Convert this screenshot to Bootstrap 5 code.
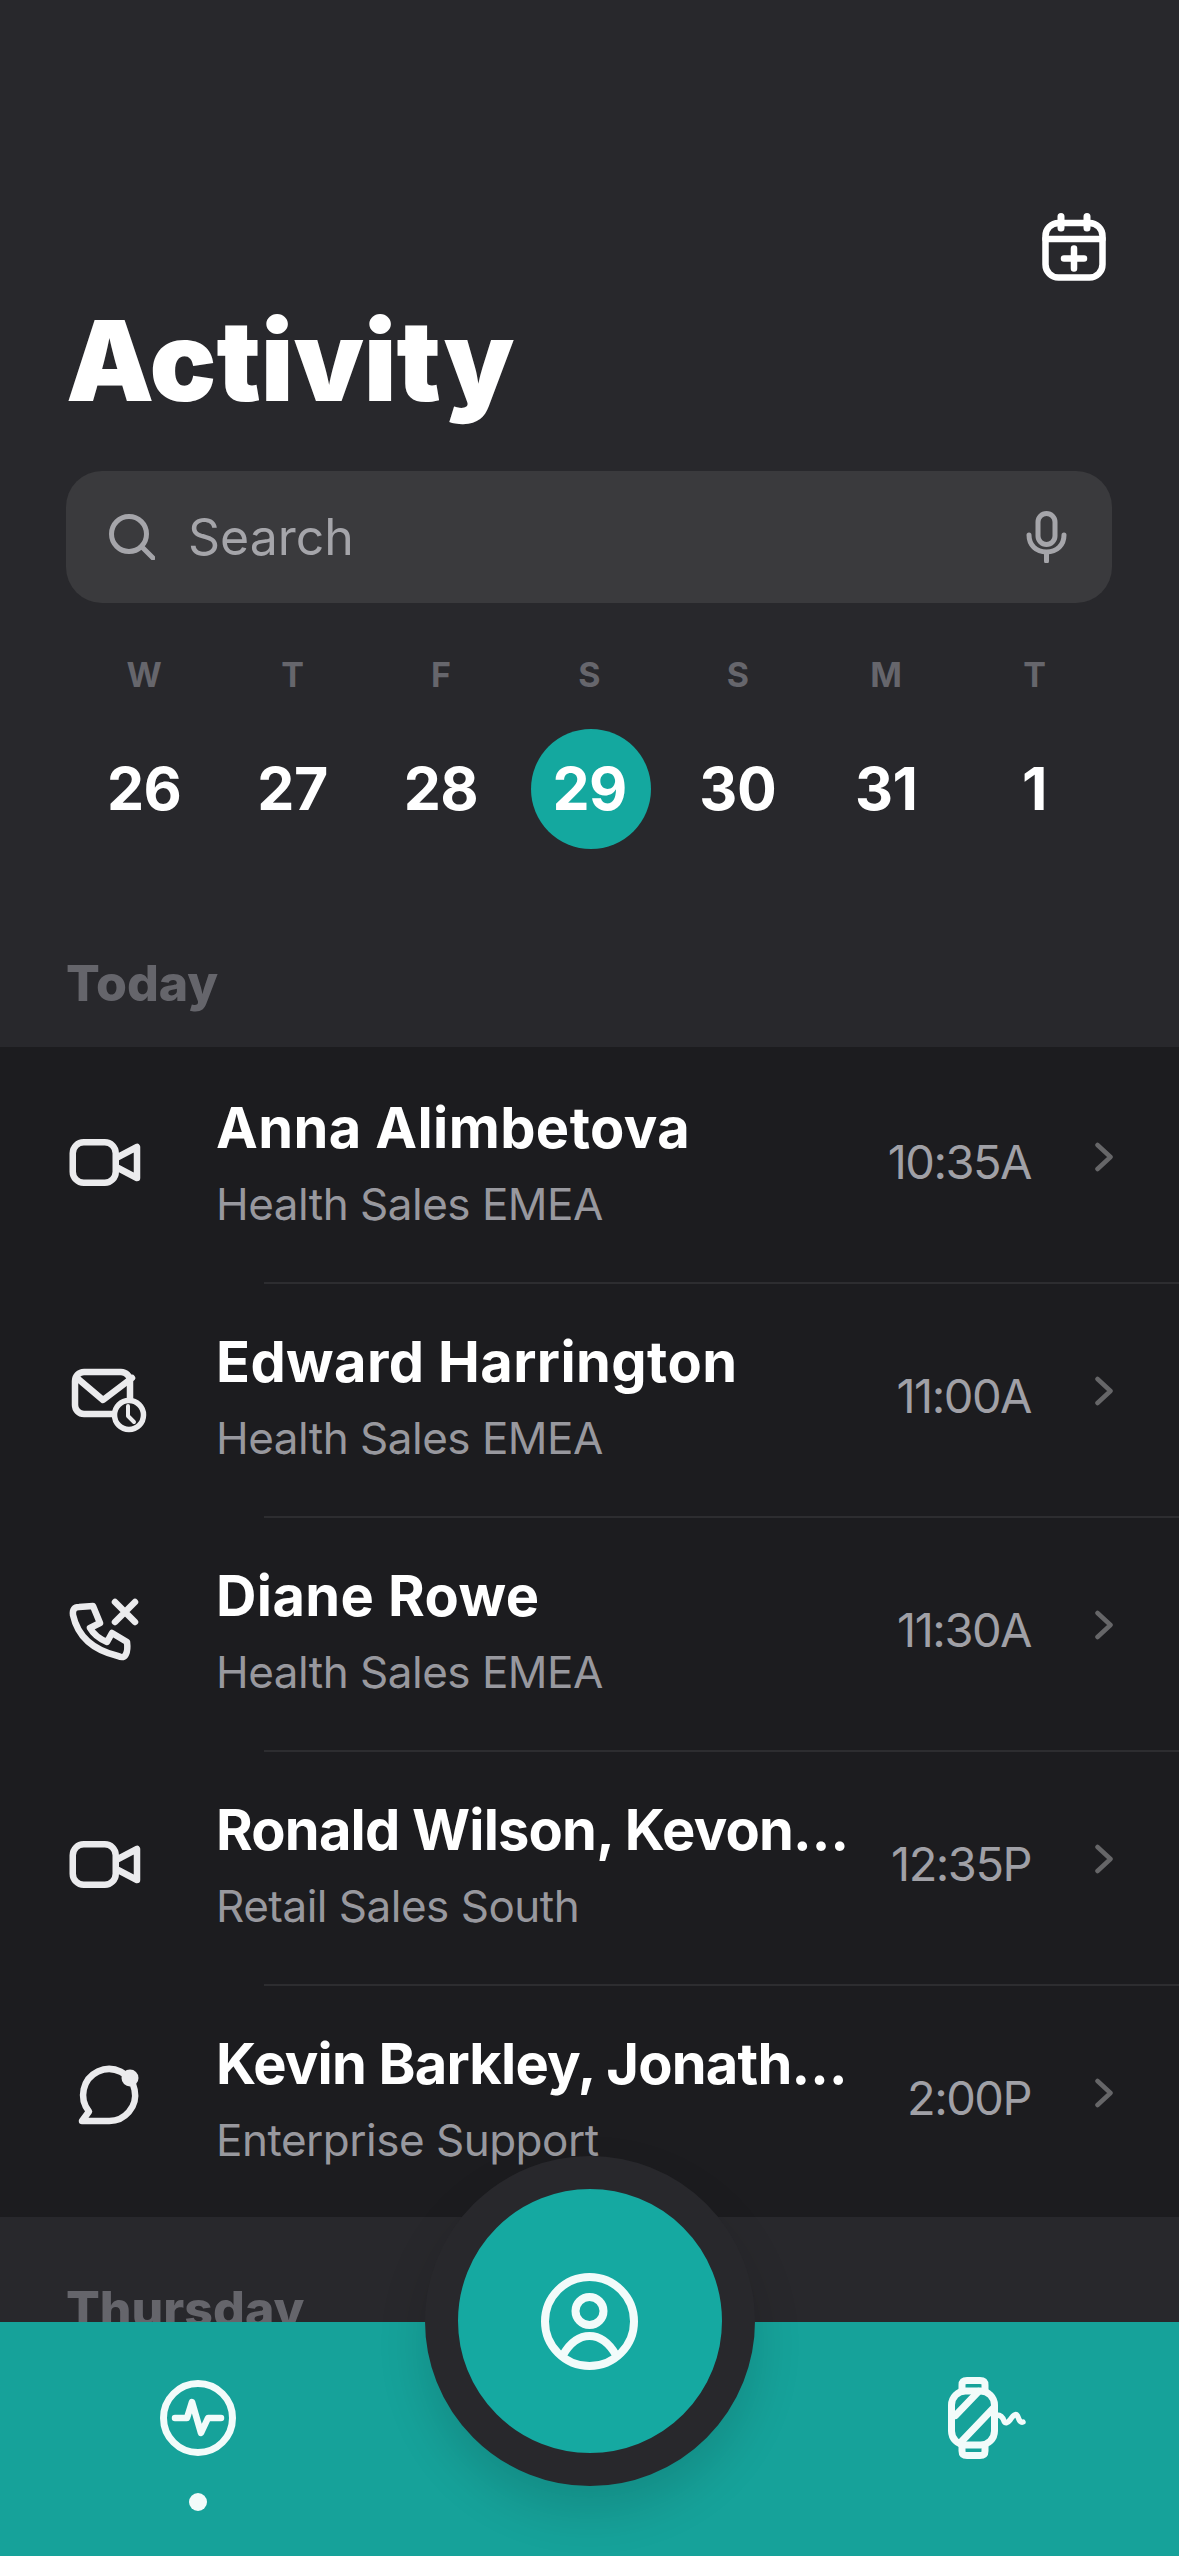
<!DOCTYPE html>
<html lang="en">
<head>
  <meta charset="UTF-8">
  <title>Activity</title>
  <link href="https://cdn.jsdelivr.net/npm/bootstrap@5.3.0/dist/css/bootstrap.min.css" rel="stylesheet">
  <style>
    body { margin: 0; background: #28282c; font-family: "Inter", "Liberation Sans", sans-serif; }
    .phone-screen { width: 1179px; height: 2556px; overflow: hidden; background: #28282c; }
    .top-actions { padding: 213px 73px 0 0; }
    .page-title { margin: 30px 0 60px 66px; font-size: 111px; line-height: 100px; font-weight: 900; color: #fff; letter-spacing: 0; }
    .search-box { height: 132px; margin: 0 67px 0 66px; padding: 0 45px 0 43px; background: #3a3a3d; border-radius: 36px; color: #a5a5aa; font-size: 50px; }
    .search-box span { margin-left: 33px; }
    .week-head { margin-top: 52px; padding: 0 70px; }
    .day-col { width: 148.4px; text-align: center; }
    .day-letter { font-size: 34px; line-height: 40px; font-weight: 700; color: #66666c; }
    .week-dates { margin-top: 34px; padding: 0 70px; }
    .day-num { height: 120px; font-size: 59px; font-weight: 700; color: #fff; letter-spacing: -.5px; }
    .day-num.is-today { width: 120px; margin-left: 16px; padding-right: 3px; background: #14a89f; border-radius: 50%; }
    .section-title { font-size: 50px; line-height: 60px; font-weight: 800; color: #65656b; margin: 0 0 0 66px; }
    .title-today { margin-top: 104px; margin-bottom: 34px; }
    .title-thu { margin-top: 62px; }
    .activity-list { height: 1170px; padding-top: 3px; overflow: hidden; background: #1c1c1f; }
    .activity-row { height: 232px; padding-left: 68px; }
    .row-icon { width: 80px; height: 80px; margin-right: 68px; flex: none; fill: none; stroke: #ebebed; stroke-width: 6.5; stroke-linecap: round; stroke-linejoin: round; }
    .row-text { width: 629px; flex: none; }
    .row-name { font-size: 56px; line-height: 76px; font-weight: 700; color: #fff; letter-spacing: .4px; white-space: nowrap; }
    .row-name.is-long { letter-spacing: -.8px; }
    .row-sub { font-size: 44px; line-height: 76px; color: #98989e; letter-spacing: -.5px; white-space: nowrap; }
    .row-time { width: 186px; flex: none; margin-bottom: 8px; text-align: right; font-size: 47px; color: #a0a0a6; letter-spacing: -1.5px; }
    .row-chevron { width: 18px; height: 30px; margin: 0 0 18px 64px; flex: none; fill: none; stroke: #666668; stroke-width: 4.5; stroke-linecap: round; stroke-linejoin: round; }
    .row-sep { height: 2px; margin: 0 0 0 264px; border: 0; background: #2d2d30; opacity: 1; }
    .bottom-bar { height: 234px; padding: 58px 153px 0 160px; background: #16a29a; }
    .nav-stroke { fill: none; stroke: #f2fbfa; stroke-linecap: round; stroke-linejoin: round; }
    .nav-dot { width: 18px; height: 18px; margin: 37px auto 0; background: #f2fbfa; border-radius: 50%; }
    .watch-icon { margin-top: -3px; }
    .fab-btn { width: 330px; height: 330px; bottom: 70px; background: #15a9a1; border: 33px solid #28282c; border-radius: 50%; box-shadow: 0 24px 50px rgba(0, 0, 0, .14); }
  </style>
</head>
<body>
  <div class="phone-screen position-relative">

    <div class="top-actions d-flex justify-content-end">
      <svg width="64" height="68" viewBox="0 0 64 68" fill="none" stroke="#fff" stroke-width="6.5" stroke-linecap="round" stroke-linejoin="round">
        <rect x="3.5" y="10" width="57" height="54.5" rx="13"/>
        <path d="M3.5 26H60.5"/>
        <path d="M19 3.5V15M45 3.5V15" stroke-width="7"/>
        <path d="M22 45.5H42M32 35.5V55.5"/>
      </svg>
    </div>
    <h1 class="page-title">Activity</h1>

    <div class="search-box d-flex align-items-center">
      <svg width="46" height="46" viewBox="0 0 46 46" fill="none" stroke="#a5a5aa" stroke-width="5" stroke-linecap="round">
        <circle cx="20" cy="20" r="17.5"/>
        <path d="M33 33L44 44"/>
      </svg>
      <span class="flex-grow-1">Search</span>
      <svg width="41" height="52" viewBox="0 0 41 52" fill="none" stroke="#a5a5aa" stroke-width="5" stroke-linecap="round">
        <rect x="12" y="2.5" width="17" height="31" rx="8.5"/>
        <path d="M3 24C3 34 10 41 20.5 41S38 34 38 24M20.5 41V50"/>
      </svg>
    </div>

    <div class="week-head d-flex">
      <div class="day-col day-letter">W</div>
      <div class="day-col day-letter">T</div>
      <div class="day-col day-letter">F</div>
      <div class="day-col day-letter">S</div>
      <div class="day-col day-letter">S</div>
      <div class="day-col day-letter">M</div>
      <div class="day-col day-letter">T</div>
    </div>
    <div class="week-dates d-flex">
      <div class="day-col"><div class="day-num d-flex align-items-center justify-content-center">26</div></div>
      <div class="day-col"><div class="day-num d-flex align-items-center justify-content-center">27</div></div>
      <div class="day-col"><div class="day-num d-flex align-items-center justify-content-center">28</div></div>
      <div class="day-col"><div class="day-num is-today d-flex align-items-center justify-content-center">29</div></div>
      <div class="day-col"><div class="day-num d-flex align-items-center justify-content-center">30</div></div>
      <div class="day-col"><div class="day-num d-flex align-items-center justify-content-center">31</div></div>
      <div class="day-col"><div class="day-num d-flex align-items-center justify-content-center">1</div></div>
    </div>

    <h2 class="section-title title-today">Today</h2>

    <div class="activity-list">
      <div class="activity-row d-flex align-items-center">
        <svg class="row-icon" viewBox="0 0 80 80">
          <rect x="4.75" y="16.25" width="43" height="40.5" rx="11"/>
          <path d="M50 31L69 21V52L50 42"/>
        </svg>
        <div class="row-text">
          <div class="row-name">Anna Alimbetova</div>
          <div class="row-sub">Health Sales EMEA</div>
        </div>
        <div class="row-time">10:35A</div>
        <svg class="row-chevron" viewBox="0 0 18 30"><path d="M2.5 3L15.5 15L2.5 27"/></svg>
      </div>
      <hr class="row-sep">
      <div class="activity-row d-flex align-items-center">
        <svg class="row-icon" viewBox="0 0 80 80">
          <rect x="7" y="12" width="55" height="42" rx="9"/>
          <path d="M9 18L35 40L64 18"/>
          <circle cx="61" cy="55" r="14.5" fill="#1c1c1f" stroke-width="5.5"/>
          <path d="M60 46V56L66 62" stroke-width="4"/>
        </svg>
        <div class="row-text">
          <div class="row-name">Edward Harrington</div>
          <div class="row-sub">Health Sales EMEA</div>
        </div>
        <div class="row-time">11:00A</div>
        <svg class="row-chevron" viewBox="0 0 18 30"><path d="M2.5 3L15.5 15L2.5 27"/></svg>
      </div>
      <hr class="row-sep">
      <div class="activity-row d-flex align-items-center">
        <svg class="row-icon" viewBox="0 0 80 80">
          <path d="M5 21Q4 13 11 13L25 12L32 29L22 34Q27 43 39 48L44 39L59 48Q60 56 58 60Q56 65 50 62Q12 53 5 21Z"/>
          <path d="M47 8L67 28M67 8L47 28"/>
        </svg>
        <div class="row-text">
          <div class="row-name">Diane Rowe</div>
          <div class="row-sub">Health Sales EMEA</div>
        </div>
        <div class="row-time">11:30A</div>
        <svg class="row-chevron" viewBox="0 0 18 30"><path d="M2.5 3L15.5 15L2.5 27"/></svg>
      </div>
      <hr class="row-sep">
      <div class="activity-row d-flex align-items-center">
        <svg class="row-icon" viewBox="0 0 80 80">
          <rect x="4.75" y="16.25" width="43" height="40.5" rx="11"/>
          <path d="M50 31L69 21V52L50 42"/>
        </svg>
        <div class="row-text">
          <div class="row-name is-long">Ronald Wilson, Kevon…</div>
          <div class="row-sub">Retail Sales South</div>
        </div>
        <div class="row-time">12:35P</div>
        <svg class="row-chevron" viewBox="0 0 18 30"><path d="M2.5 3L15.5 15L2.5 27"/></svg>
      </div>
      <hr class="row-sep">
      <div class="activity-row d-flex align-items-center">
        <svg class="row-icon" viewBox="0 0 80 80">
          <path d="M40 59H14L21 49.5A26 26 0 1 1 40 59Z"/>
          <circle cx="62" cy="16" r="8.5" fill="#ebebed" stroke="none"/>
        </svg>
        <div class="row-text">
          <div class="row-name is-long">Kevin Barkley, Jonath…</div>
          <div class="row-sub">Enterprise Support</div>
        </div>
        <div class="row-time">2:00P</div>
        <svg class="row-chevron" viewBox="0 0 18 30"><path d="M2.5 3L15.5 15L2.5 27"/></svg>
      </div>
    </div>

    <h2 class="section-title title-thu">Thursday</h2>

    <div class="bottom-bar position-absolute bottom-0 start-0 end-0 d-flex justify-content-between align-items-start">
      <div>
        <svg class="nav-stroke d-block" width="76" height="76" viewBox="0 0 76 76" stroke-width="7">
          <circle cx="38" cy="38" r="34.5"/>
          <path d="M15 38H27L32 22L41 53L48 38H61" stroke-width="6.5"/>
        </svg>
        <div class="nav-dot"></div>
      </div>
      <svg class="nav-stroke watch-icon" width="78" height="82" viewBox="0 0 78 82" stroke-width="7">
        <rect x="3.5" y="14" width="43" height="54" rx="14"/>
        <path d="M14 14V8Q14 3.5 19 3.5H32Q37 3.5 37 8V14M14 68V74Q14 78.5 19 78.5H32Q37 78.5 37 74V68"/>
        <path d="M7.5 38.5L30.5 14.5M14 64L45.5 31"/>
        <path d="M49 38Q54 38 56 44Q58 48 62 43Q68 34 70 40Q72 46 75 45" stroke-width="5.5"/>
      </svg>
    </div>

    <div class="fab-btn position-absolute start-50 translate-middle-x d-flex align-items-center justify-content-center">
      <svg class="nav-stroke" width="97" height="97" viewBox="0 0 97 97" stroke-width="8">
        <circle cx="48.5" cy="48.5" r="44.5"/>
        <circle cx="48.5" cy="38" r="14"/>
        <path d="M22 82Q33 63 48.5 63Q64 63 75 82"/>
      </svg>
    </div>

  </div>
  <script src="https://cdn.jsdelivr.net/npm/bootstrap@5.3.0/dist/js/bootstrap.bundle.min.js"></script>
</body>
</html>
